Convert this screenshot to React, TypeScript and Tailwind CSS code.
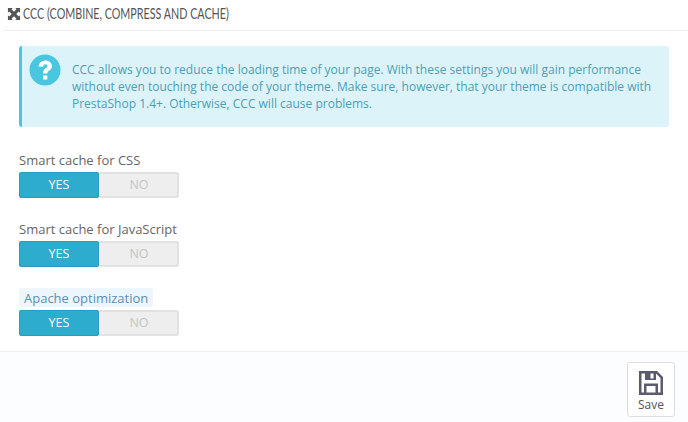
const bodyFont = { fontFamily: '"Open Sans", sans-serif' };

function Toggle() {
  return (
    <div className="flex h-[26px] w-[160px] rounded-[3px] bg-[#eeeeee] shadow-[inset_0_0_0_2px_#e2e2e2] text-[12.500px] leading-[25px] text-center">
      <div className="w-[80px] rounded-[3px] bg-[#2eacce] text-white shadow-[inset_0_0_0_1px_#2a9dbc]">YES</div>
      <div className="w-[80px] text-[#c4c4c4]">NO</div>
    </div>
  );
}

function Field({ label, hint }: { label: string; hint?: boolean }) {
  return (
    <div className="flex flex-col items-start">
      {hint ? (
        <span className="mb-[3px] h-[19px] rounded-[3px] bg-[#edf6fb] px-[5px] text-[13px] leading-[20px] text-[#5e8fb3]">
          {label}
        </span>
      ) : (
        <span className="mb-[3px] h-[19px] text-[13px] leading-[21px] text-[#666666]">{label}</span>
      )}
      <Toggle />
    </div>
  );
}

export default function App() {
  return (
    <div className="h-[422px] w-[688px] overflow-hidden bg-white" style={bodyFont}>
      <div className="ml-[3px] flex h-[31px] items-center gap-[2px] border-b border-[#eeeeee] pb-[3px] pl-[4px]">
        <svg width="14" height="14" viewBox="0 0 15 15" className="shrink-0">
          <path d="M1 1h5.200L4.800 2.400 7.500 5.100 10.200 2.400 8.800 1H14v5.200l-1.400-1.400L9.900 7.500l2.700 2.700L14 8.800V14H8.800l1.400-1.400L7.500 9.900l-2.700 2.700L6.200 14H1V8.800l1.400 1.400 2.700-2.700L2.400 4.800 1 6.200z" fill="#555555" />
        </svg>
        <span
          className="inline-block origin-left scale-x-[0.716] whitespace-nowrap text-[15px] text-[#555555]"
          style={{ fontFamily: 'Lato, sans-serif' }}
        >
          CCC (COMBINE, COMPRESS AND CACHE)
        </span>
      </div>
      <div className="px-[19px] pt-[15px]">
        <div className="flex h-[81px] w-[650px] gap-[11px] rounded-[3px] border-l-[3px] border-[#4ac7e0] bg-[#dcf4f9] pl-[7px] pt-[8px]">
          <svg width="32" height="32" viewBox="0 0 32 32" className="shrink-0">
            <circle cx="16" cy="16" r="15.500" fill="#4ac7e0" />
            <path d="M9.500 12.500C10 8.500 13 6.500 16.500 6.500c3.800 0 6.500 2.500 6.500 5.500 0 2.600-1.500 3.800-3 4.800-1.200.8-1.700 1.300-1.700 2.700h-4.300c0-3 1-4.200 2.700-5.300 1.200-.8 1.800-1.300 1.800-2.200 0-1-.9-1.700-2-1.700-1.300 0-2.200.8-2.500 2.500zM14 21.500h4.300v4H14z" fill="#ffffff" />
          </svg>
          <p className="w-[590px] pt-[7px] text-[12px] leading-[17px] text-[#4c9fb5]">
            CCC allows you to reduce the loading time of your page. With these settings you will gain performance without even touching the code of your theme. Make sure, however, that your theme is compatible with PrestaShop 1.4+. Otherwise, CCC will cause problems.
          </p>
        </div>
        <div className="mt-[23px] flex flex-col gap-[21px]">
          <Field label="Smart cache for CSS" />
          <Field label="Smart cache for JavaScript" />
          <Field label="Apache optimization" hint />
        </div>
      </div>
      <div className="mt-[15px] flex h-[71px] justify-end border-t border-[#eeeeee] bg-[#fcfdfe] pr-[13px] pt-[10px]">
        <div className="flex h-[55px] w-[48px] flex-col items-center rounded-[3px] border border-[#dddddd] bg-white pt-[8px]">
          <svg width="24" height="24" viewBox="0 0 24 24">
            <path fillRule="evenodd" d="M0 0h18l6 6v18H0zM2.500 2.500v19h2.500v-9h14v9h2.500V7l-4.500-4.500H17v6.500H6V2.500zM7.500 15v6.500h9V15zM11.500 2.500v5h3v-5z" fill="#5b5a6e" />
          </svg>
          <span className="mt-[2px] text-[12px] leading-[15px] text-[#555555]">Save</span>
        </div>
      </div>
    </div>
  );
}
